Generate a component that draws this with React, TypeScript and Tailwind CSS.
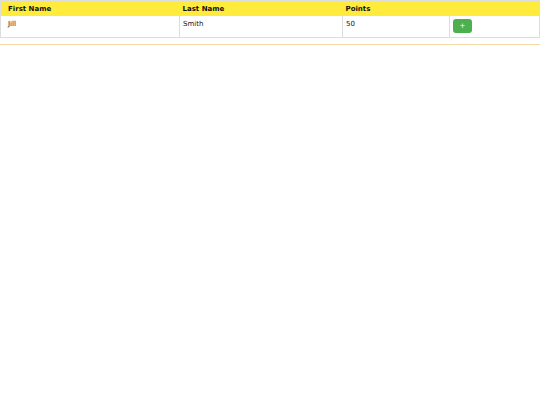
export default function App() {
  const rows = [{ first: 'Jill', last: 'Smith', points: 50 }]

  return (
    <div className="font-['DejaVu_Sans',sans-serif] text-[7px] text-[#111]">
      <table className="w-full border-collapse border border-[#ddd]">
        <thead>
          <tr className="bg-[#ffeb3b] text-left">
            <th className="w-[179px] px-[7px] h-[15px] pt-[2px] font-bold">First Name</th>
            <th className="w-[163px] px-[3px] pt-[2px] font-bold">Last Name</th>
            <th className="w-[107px] px-[3px] pt-[2px] font-bold">Points</th>
            <th></th>
          </tr>
        </thead>
        <tbody>
          {rows.map(r => (
            <tr key={r.first} className="h-[22px] align-top">
              <td className="border border-[#ddd] px-[7px] pt-[3px]">{r.first}</td>
              <td className="border border-[#ddd] px-[3px] pt-[3px]">{r.last}</td>
              <td className="border border-[#ddd] px-[3px] pt-[3px]">{r.points}</td>
              <td className="border border-[#ddd] px-[3px] pt-[3px]">
                <button className="block w-[19px] h-[14px] rounded-[3px] bg-[#4caf50] text-white text-[7px] leading-none">
                  +
                </button>
              </td>
            </tr>
          ))}
        </tbody>
      </table>
      <div className="mt-[6px] h-px bg-[#f7d9a8]"></div>
    </div>
  )
}
